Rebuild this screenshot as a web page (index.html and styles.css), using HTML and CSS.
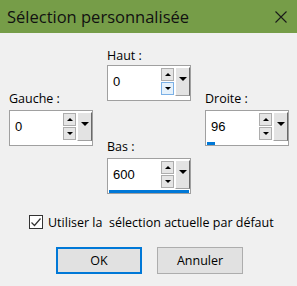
FILE: index.html
```html
<!DOCTYPE html>
<html>
<head>
    <meta charset="UTF-8">
    <title>Sélection personnalisée</title>
    <link rel="stylesheet" href="styles.css">
</head>
<body>
    <div class="titlebar">
        <span class="title">Sélection personnalisée</span>
        <svg class="close" width="12" height="12" viewBox="0 0 12 12">
            <path d="M0.5 0.5 L11.5 11.5 M11.5 0.5 L0.5 11.5" stroke="#1a1a1a" stroke-width="1.1" fill="none"/>
        </svg>
    </div>

    <div class="fields">
        <div class="col col-side">
            <label class="lbl">Gauche :</label>
            <div class="spin">
                <div class="spin-main">
                    <span class="value">0</span>
                    <span class="arrows">
                        <span class="arrow"><span class="tri-up"></span></span>
                        <span class="arrow"><span class="tri-down"></span></span>
                    </span>
                    <span class="drop"><span class="tri-drop"></span></span>
                </div>
                <div class="track"><div class="bar" style="width:0%"></div></div>
            </div>
        </div>

        <div class="col">
            <label class="lbl lbl-haut">Haut :</label>
            <div class="spin">
                <div class="spin-main">
                    <span class="value">0</span>
                    <span class="arrows">
                        <span class="arrow"><span class="tri-up"></span></span>
                        <span class="arrow hover"><span class="tri-down"></span></span>
                    </span>
                    <span class="drop"><span class="tri-drop"></span></span>
                </div>
                <div class="track"><div class="bar" style="width:0%"></div></div>
            </div>

            <label class="lbl lbl-bas">Bas :</label>
            <div class="spin">
                <div class="spin-main">
                    <span class="value">600</span>
                    <span class="arrows">
                        <span class="arrow"><span class="tri-up"></span></span>
                        <span class="arrow"><span class="tri-down"></span></span>
                    </span>
                    <span class="drop"><span class="tri-drop"></span></span>
                </div>
                <div class="track"><div class="bar" style="width:100%"></div></div>
            </div>
        </div>

        <div class="col col-side">
            <label class="lbl">Droite :</label>
            <div class="spin">
                <div class="spin-main">
                    <span class="value">96</span>
                    <span class="arrows">
                        <span class="arrow"><span class="tri-up"></span></span>
                        <span class="arrow"><span class="tri-down"></span></span>
                    </span>
                    <span class="drop"><span class="tri-drop"></span></span>
                </div>
                <div class="track"><div class="bar" style="width:10%"></div></div>
            </div>
        </div>
    </div>

    <div class="check-row">
        <span class="checkbox">
            <svg width="12" height="12" viewBox="0 0 12 12">
                <path d="M1.5 6.5 L4.5 9.5 L10.5 2.5" stroke="#333" stroke-width="1.2" fill="none"/>
            </svg>
        </span>
        <span class="check-text">Utiliser la&nbsp; sélection actuelle par défaut</span>
    </div>

    <div class="buttons">
        <button class="btn btn-default">OK</button>
        <button class="btn">Annuler</button>
    </div>
</body>
</html>
```

FILE: styles.css
```css
/* fenêtre de dialogue */
body {
    margin: 0;
    background-color: #f0f0f0;
    font-family: "Open Sans", "Noto Sans", sans-serif;
    font-size: 12.5px;
    color: #000;
}

.titlebar {
    height: 33px;
    background-color: #769d48;
    display: flex;
    align-items: center;
    justify-content: space-between;
    padding: 0 10px 0 7px;
}

.title {
    font-size: 16.5px;
    color: #111;
}

.close {
    display: block;
}

/* champs */
.fields {
    display: flex;
    align-items: flex-start;
    gap: 14px;
    padding: 15px 0 0 9px;
}

.col {
    width: 84px;
    display: flex;
    flex-direction: column;
}

.col-side {
    padding-top: 43px;
}

.lbl {
    display: block;
    line-height: 16px;
    height: 16px;
    margin-bottom: 3px;
}

.lbl-haut {
    margin-bottom: 1px;
}

.lbl-bas {
    margin-top: 38px;
}

.spin {
    height: 36px;
    box-sizing: border-box;
    border: 1px solid #a0a0a0;
    background-color: #fff;
    display: flex;
    flex-direction: column;
}

.spin-main {
    height: 30px;
    display: flex;
    align-items: flex-start;
}

.value {
    width: 48px;
    padding-left: 5px;
    line-height: 31px;
    font-family: "Liberation Sans", Arial, sans-serif;
    font-size: 13px;
    color: #000;
}

.arrows {
    display: flex;
    flex-direction: column;
    gap: 1px;
    padding-top: 2px;
    margin-right: 1px;
}

.arrow {
    width: 13px;
    height: 13px;
    box-sizing: border-box;
    border: 1px solid #adadad;
    background-color: #e5e5e5;
    display: flex;
    align-items: center;
    justify-content: center;
}

.arrow.hover {
    border-color: #7ab0e6;
    background-color: #e5f1fb;
}

.tri-up {
    width: 0;
    height: 0;
    border-left: 3px solid transparent;
    border-right: 3px solid transparent;
    border-bottom: 3px solid #000;
}

.tri-down {
    width: 0;
    height: 0;
    border-left: 3px solid transparent;
    border-right: 3px solid transparent;
    border-top: 3px solid #000;
}

.drop {
    width: 15px;
    height: 29px;
    margin-top: 1px;
    box-sizing: border-box;
    background-color: #e3e3e3;
    border-top: 1px solid #fff;
    border-left: 1px solid #fff;
    border-right: 1px solid #696969;
    border-bottom: 1px solid #a0a0a0;
    display: flex;
    justify-content: center;
    padding-top: 9px;
}

.tri-drop {
    width: 0;
    height: 0;
    border-left: 4px solid transparent;
    border-right: 4px solid transparent;
    border-top: 4px solid #000;
}

.track {
    height: 3px;
    margin: 1px 1px 0 1px;
}

.bar {
    height: 3px;
    background-color: #0078d7;
}

/* case à cocher */
.check-row {
    display: flex;
    align-items: center;
    margin-top: 20px;
    padding-left: 29px;
    height: 16px;
}

.checkbox {
    width: 14px;
    height: 14px;
    box-sizing: border-box;
    border: 1px solid #333;
    background-color: #fff;
    display: flex;
    align-items: center;
    justify-content: center;
    margin-right: 5px;
}

.checkbox svg {
    display: block;
}

/* boutons */
.buttons {
    display: flex;
    gap: 15px;
    padding-left: 56px;
    margin-top: 17px;
}

.btn {
    width: 86px;
    height: 27px;
    box-sizing: border-box;
    background-color: #e1e1e1;
    border: 1px solid #adadad;
    font-family: "Open Sans", "Noto Sans", sans-serif;
    font-size: 12.5px;
    color: #000;
    padding: 0;
}

.btn-default {
    border: 2px solid #0078d7;
}
```
